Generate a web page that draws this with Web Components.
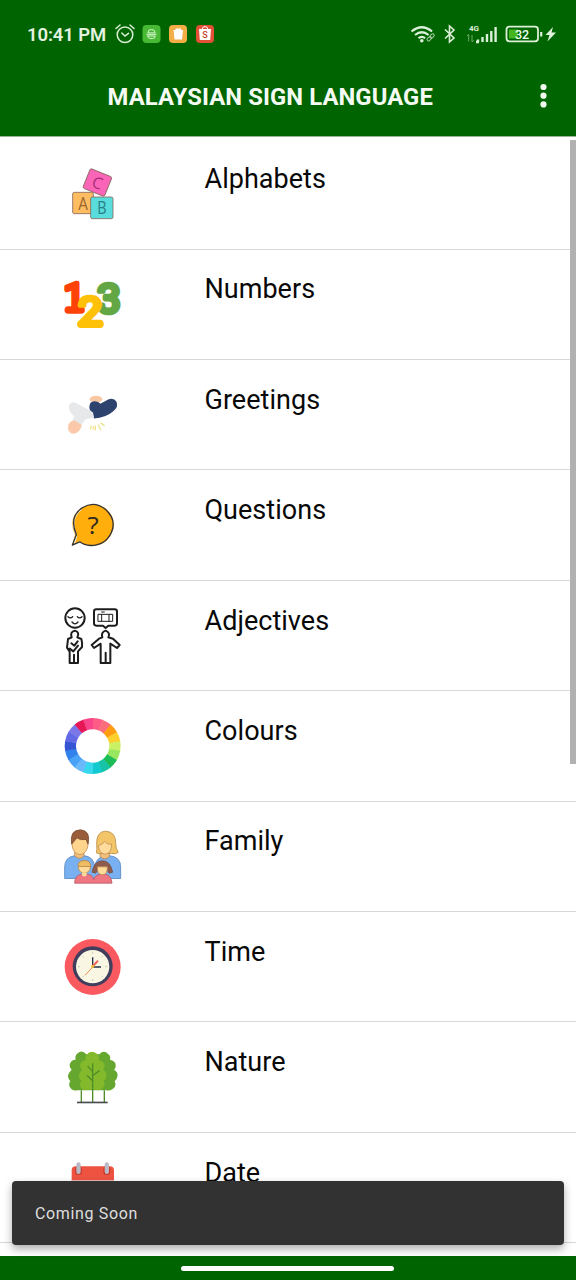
<!DOCTYPE html>
<html lang="en"><head><meta charset="utf-8"><title>Malaysian Sign Language</title>
<style>html,body{margin:0;height:1280px;overflow:hidden;background:#fff;font-family:Roboto,"Liberation Sans",sans-serif}</style></head>
<body><sign-app></sign-app>
<script>
const define=(name,html)=>customElements.define(name,class extends HTMLElement{
  constructor(){super();const t=document.createElement('template');t.innerHTML=html;this.attachShadow({mode:'open'}).append(t.content.cloneNode(true));}
});

define('status-bar',`<style>:host{display:flex;height:68px;align-items:center;color:#e4f2e0;box-sizing:border-box;padding:0 18px 0 27px;justify-content:space-between}
.l{display:flex;align-items:center}.t{font-size:18.500px;font-weight:600;line-height:24px;letter-spacing:-.12px;width:88px;white-space:nowrap;margin-top:2px}svg{display:block}text{font-family:Roboto,sans-serif}</style>
<div class="l"><span class="t">10:41 PM</span>
<svg width="102" height="24" viewBox="0 0 102 24" fill="none" stroke="#d9efd5" stroke-width="1.5" stroke-linecap="round"><circle cx="10" cy="12.7" r="7.8"/><path d="M6.8 11l3.2 3 3.500-2.700M1 6.500l4-3.500M19 6.500l-4-3.500"/>
<g stroke="none"><rect x="27.500" y="3" width="18" height="18" rx="4" fill="#48b934"/><rect x="54" y="3" width="18" height="18" rx="4" fill="#f3ad45"/><rect x="81" y="3" width="18" height="18" rx="4" fill="#e25136"/></g>
<g stroke="#d8f7d0" stroke-width="1"><path d="M32.800 10.500q0-3 3.700-3t3.700 3zM31.800 12.300h9.400M32.800 14h7.400q0 2.500-2.500 2.500h-2.400q-2.500 0-2.500-2.500"/></g>
<path stroke="none" fill="#fff" d="M58.500 8h9.500l-1 9.500h-7.500zM60.500 6.500h5.500v2h-5.500z"/><path stroke="none" fill="#fff" d="M84 7h12l-.8 11H84.800z"/><path stroke="#fff" stroke-width="1" d="M87 8q0-3.500 3-3.500t3 3.500"/><text x="87.200" y="16.300" font-size="9" font-weight="500" fill="#c4452f" stroke="none">S</text></svg></div>
<svg width="148" height="28" viewBox="0 0 148 28" fill="none" stroke="#dcefd8" stroke-width="2.200">
<path d="M1.500 11.500q10.300-8.500 20.600 0M5 15q6.800-5.500 13.600 0M8.500 18.200q3.300-2.500 6.600 0"/><circle cx="11.800" cy="20.800" r="1.800" fill="#dcefd8" stroke="none"/><g stroke-width="1" stroke="#a9cfa4"><rect x="16.800" y="17.500" width="5" height="3" rx="1.500" transform="rotate(-43 19 19)"/><rect x="19.500" y="14.500" width="5" height="3" rx="1.500" transform="rotate(-43 22 16)"/></g>
<path stroke-width="1.600" d="M35 9.500l9 8.500-4.500 4V6l4.500 4-9 8.500"/>
<text x="59" y="11" fill="#dcefd8" stroke="none" font-size="8" font-weight="700">4G</text><g stroke="#6fa969" stroke-width="1"><path d="M58.700 14.500v7M62 15v7M57 16l1.700-1.700M62 22l1.700-1.700"/></g>
<path stroke-width="2.400" d="M68 19.500v2.500M72.500 17v5M77 14v8M81.300 11v11M85.600 7v15M66 22h3"/>
<rect x="96.500" y="6.700" width="31.500" height="14.600" rx="3" stroke-width="1.800"/><rect x="99" y="9.500" width="9" height="9" fill="#45b51d" stroke="none"/><path d="M131.200 12v4.500"/><text x="105" y="18.600" fill="#f0fff0" stroke="none" font-size="12.500" font-weight="500">32</text>
<path d="M143 7l-7.500 8h4l-2 6.500 8.500-9h-4.500z" fill="#e4f2e0" stroke="none"/></svg>`);

define('app-header',`<style>:host{display:block;background:#006400;height:136px;border-bottom:1px solid #9bb596;box-sizing:content-box}
.bar{display:flex;height:56px;align-items:center;padding:0 25px 0 107.500px;justify-content:space-between}
h1{font-size:23.800px;line-height:30px;font-weight:700;margin:1px 0 0;color:#f5fbf3;white-space:nowrap;letter-spacing:.1px}svg{display:block}</style>
<status-bar></status-bar><div class="bar"><h1><slot></slot></h1><svg width="15" height="28" fill="#eff9ec"><circle cx="7.500" cy="5" r="3.100"/><circle cx="7.500" cy="13.700" r="3.100"/><circle cx="7.500" cy="22.400" r="3.100"/></svg></div>`);

const sector=(n,i,c)=>{const a=(i*360/n-90)*Math.PI/180,b=((i+1)*360/n-89)*Math.PI/180,p=(r,t)=>(122+r*Math.cos(t)).toFixed(1)+' '+(120+r*Math.sin(t)).toFixed(1);return `<path fill="${c}" d="M${p(84,a)}A84 84 0 0 1 ${p(84,b)}L${p(50,b)}A50 50 0 0 0 ${p(50,a)}z"/>`};
const art={
alphabets:`<g stroke="#85675f" stroke-width="2.500"><rect x="62" y="112" width="62" height="64" rx="5" fill="#ffbd62"/><rect x="101" y="51" width="70" height="63" rx="5" transform="rotate(22 136 83)" fill="#fb65b8"/><rect x="116" y="126" width="67" height="65" rx="5" fill="#59dcdc"/></g><g font-family="Open Sans,sans-serif" fill="#654f52" text-anchor="middle"><text x="0" y="0" font-size="54" fill="#9a682f" transform="translate(93 164) scale(.85 1)">A</text><text x="0" y="0" font-size="54" fill="#287f85" transform="translate(150 178) scale(.8 1)">B</text><text x="136" y="101" font-size="48" fill="#a92c79" transform="rotate(20 136 84)">C</text></g>`,
numbers:`<g font-family="Roboto,sans-serif" font-weight="400" stroke-linejoin="round" text-anchor="middle" stroke-width="14"><text x="0" y="0" font-size="122" fill="#62a744" stroke="#62a744" transform="translate(171 144) scale(1.04 1)">3</text><text x="67" y="136" font-size="115" fill="#ff4208" stroke="#ff4208">1</text><path d="M49 134H87" stroke="#ff4208" stroke-width="23" stroke-linecap="round"/><text x="0" y="0" font-size="119" fill="#ffc107" stroke="#ffc107" transform="translate(115 180) scale(1.080 1)">2</text><path d="M86 177H144" stroke="#ffc107" stroke-width="22" stroke-linecap="round"/></g>`,
greetings:`<ellipse cx="132" cy="72" rx="19" ry="10" fill="#fac7a4"/><path d="M112 96q0-18 15-18 13 0 18 8l25-14q17-4 23 7 8 16-10 30-22 19-57 21l-3-18q-11-5-11-16z" fill="#2d426d"/><path d="M51 91q5-12 18-9l41 22q13 5 15 24l-24 4-21 27-20-20 7-16q-19-14-16-32z" fill="#e7e8ea"/><path d="M49 148q7-14 20-11l21 13q-8 23-24 26-22 0-17-28z" fill="#fbc9a9"/><path d="M119 151l-5 11M130 151v15M139 148l7 17M146 143l12 9M125 154l-3 9" stroke="#eee48e" stroke-width="4"/>`,
questions:`<path d="M69 151q-23-53 18-81 35-22 71-1 35 25 25 67-13 40-51 46-30 3-51-13l-21 12z" fill="#ffae0b"/><path d="M71 148q-18-49 17-75" fill="none" stroke="#fff8d8" stroke-width="5"/><path d="M73 153l-7 22" fill="none" stroke="#fff8d8" stroke-width="6"/><path d="M61 181l12-31Q50 96 91 69q35-23 70 5 34 32 17 69-18 39-62 39-20-1-33-11z" fill="none" stroke="#333238" stroke-width="4" stroke-linejoin="round"/><text x="0" y="0" text-anchor="middle" font-family="Open Sans,sans-serif" font-size="72" font-weight="400" fill="#302a20" transform="translate(123 149) scale(1.08 1)">?</text>`,
adjectives:`<g fill="none" stroke="#1d1d1d" stroke-width="6" stroke-linejoin="round" stroke-linecap="round"><circle cx="69" cy="66" r="29"/><path d="M48 62q7 7 14 0M76 62q7 7 14 0M60 78q9 11 18 0" stroke-width="4"/><path d="M133 40h55q7 0 7 7v35q0 7-7 7h-19l-8 7-8-7h-20q-7 0-7-7V47q0-7 7-7z"/><path d="M139 55h43v21h-43zM149 56v19M171 56v19M149 48h8" stroke-width="3"/><path d="M59 124q-6-17 10-20 15 5 7 20l12 5q4 14 2 24l-12 13v35H53v-34l-8-12 3-26zM58 142l9 7 10-13M78 149l-14 17-11-8M66 176v25"/><path d="M151 124q-5-15 10-20 15 6 8 20l14 4 20 19-8 9-20-13v58h-29v-58l-20 13-7-9 22-19zM161 170v29"/></g>`,
colours:['#ff5b87','#f96d7d','#ff9d12','#ffcf2e','#caf064','#99e75e','#1bbc55','#16c3a6','#12c9d0','#37d7ee','#69b9fb','#49a2f8','#3282ed','#3555d2','#6269e7','#7c77e8','#e61757','#f9438a'].map((c,i)=>sector(18,i,c)).join(''),
family:`<g stroke-width="2.500"><path d="M38 187v-35q0-29 29-33h32q24 3 29 30 6-26 31-30h16q31 4 31 34v34z" fill="#79b0f2" stroke="#5988bd"/><path d="M68 103h28v16q-14 15-28 0zM144 105h28v16q-14 14-28 0z" fill="#efc07b" stroke="#bd8853"/><ellipse cx="84" cy="84" rx="24" ry="31" fill="#ffd58e" stroke="#c69358"/><path d="M59 84q-7-43 27-43 31 3 22 43l-6-14q-19 3-27-5z" fill="#9a5d3b" stroke="#805036"/><path d="M133 110q3-10 1-24-2-40 27-41 31 2 30 37 0 17 8 26-7 7-20 4H143q-7 1-10-2z" fill="#f1c568" stroke="#bc8d46"/><path d="M139 88q15-3 18-12 11 11 22 8 0 28-20 30-18-2-20-26z" fill="#ffdc9e" stroke="#c69358"/><path d="M68 201q0-24 21-27h17q17 2 19 17 3-15 21-17h14q18 4 20 27z" fill="#ed7681" stroke="#bd5868"/><circle cx="97" cy="153" r="18" fill="#ffdb9a" stroke="#bb864d"/><path d="M78 151q-1-18 19-18 20 0 19 18z" fill="#eebd62" stroke="#b98747"/><path d="M120 168q8-35 31-34 23-1 31 34l-11 3-8-14h-23l-9 14z" fill="#8e5b4e" stroke="#775045"/><path d="M136 152h30q1 24-15 24t-15-24z" fill="#ffdb9a" stroke="#bb864d"/><path d="M90 169v8q7 8 14 0v-8z" fill="#ffdb9a"/></g>`,
time:`<circle cx="122" cy="123" r="84" fill="#fa5960"/><circle cx="122" cy="121" r="60" fill="#403d5d"/><circle cx="122" cy="122" r="50" fill="#f9f7e4"/><path d="M122 77v6M122 159v6M78 122h6M160 122h6M91 90l4 4M153 90l-4 4M91 154l4-4M153 154l-4-4" stroke="#afb4a3" stroke-width="2"/><path d="M122 121V94M122 123h25" stroke="#252f49" stroke-width="4"/><path d="M99 148l37-40" stroke="#e9954c" stroke-width="3"/><path d="M124 119l14-15" stroke="#f2615a" stroke-width="6"/><circle cx="122" cy="121" r="5" fill="#f6b63b"/>`,
nature:`<path d="M88 163v36M157 163v36" stroke="#4d8c27" stroke-width="4"/><path d="M76 53q14-12 27 2h39q14-14 27 0 8 6 5 17 20 4 17 21-1 6-5 9 14 8 10 21-1 8-8 13 7 15-7 24-8 7-19 3H77q-17 4-24-10-4-10 2-17-12-13-3-26l7-8q-11-12-2-24 6-7 14-6-3-12 5-19z" fill="#66a72f"/><path d="M104 57q12-16 31-3 8 7 6 19 18 4 17 18-1 8-5 11 13 9 10 21-2 8-8 12 7 14-4 23-8 8-22 4h-18q-21 5-27-12-1-9 4-15-13-12-3-27l5-6q-11-13 0-25 4-4 11-4-3-10 3-16z" fill="#83b92b"/><path d="M122 82v118M121 106l-14-15M123 119l20-15M121 134l-16-15" fill="none" stroke="#4d8c27" stroke-width="4"/><path d="M75 200h92" stroke="#484b4e" stroke-width="5"/>`,
date:`<path d="M59 110V69q0-12 12-12h103q12 0 12 12v41z" fill="#ed5340"/><rect x="59" y="99" width="127" height="90" fill="#e9e9e9"/><g><rect x="69" y="57" width="21" height="26" rx="9" fill="#c93b31"/><rect x="154" y="57" width="21" height="26" rx="9" fill="#c93b31"/><rect x="73" y="45" width="13" height="35" rx="6.500" fill="#b9bac5"/><rect x="158" y="45" width="13" height="35" rx="6.500" fill="#b9bac5"/></g>`};
const yOffset={alphabets:-3,numbers:-1,greetings:-.6,questions:.6,adjectives:0,colours:0,family:2.5,time:3,nature:3.6,date:2};

customElements.define('topic-icon',class extends HTMLElement{
 connectedCallback(){const n=this.getAttribute('name');this.attachShadow({mode:'open'}).innerHTML=`<style>:host{display:block;width:80px;height:80px}svg{display:block;width:80px;height:80px}</style><svg viewBox="0 ${yOffset[n]} 240 240">${art[n]}</svg>`}
});
customElements.define('topic-row',class extends HTMLElement{
 connectedCallback(){this.attachShadow({mode:'open'}).innerHTML=`<style>:host{display:grid;grid-template-columns:80px 1fr;column-gap:72.500px;height:110.400px;box-sizing:border-box;padding:15px 20px 0 52px;border-bottom:1px solid #d8d8d8}.label{font-size:27px;line-height:32px;margin-top:8.800px;color:#080808;letter-spacing:.03px}</style><topic-icon name="${this.getAttribute('icon')}"></topic-icon><div class="label"><slot></slot></div>`}
});
define('topic-list',`<style>:host{display:block;height:1119px;overflow:hidden;position:relative;background:#fff;padding-top:2.300px;box-sizing:border-box}.thumb{position:absolute;right:0;top:3px;width:6px;height:624px;background:#b1b1b1}</style><slot></slot><div class="thumb"></div>`);
define('snack-bar',`<style>:host{display:flex;align-items:center;position:absolute;left:12px;right:12px;top:1181px;height:64px;box-sizing:border-box;padding-left:23px;background:#323232;border-radius:4px;box-shadow:0 4px 9px rgba(0,0,0,.32);color:#dfdfdf;font-size:16px;letter-spacing:.66px}</style><span><slot></slot></span>`);
define('home-bar',`<style>:host{display:flex;height:24px;background:#006400;justify-content:center;align-items:center}i{width:213px;height:5px;border-radius:3px;background:#fff;margin-right:1px}</style><i></i>`);
const topics=['Alphabets','Numbers','Greetings','Questions','Adjectives','Colours','Family','Time','Nature','Date'];
define('sign-app',`<style>:host{display:block;width:576px;height:1280px;position:relative;overflow:hidden}</style><app-header>MALAYSIAN SIGN LANGUAGE</app-header><topic-list>${topics.map(t=>`<topic-row icon="${t.toLowerCase()}">${t}</topic-row>`).join('')}</topic-list><home-bar></home-bar><snack-bar>Coming Soon</snack-bar>`);
</script></body></html>
